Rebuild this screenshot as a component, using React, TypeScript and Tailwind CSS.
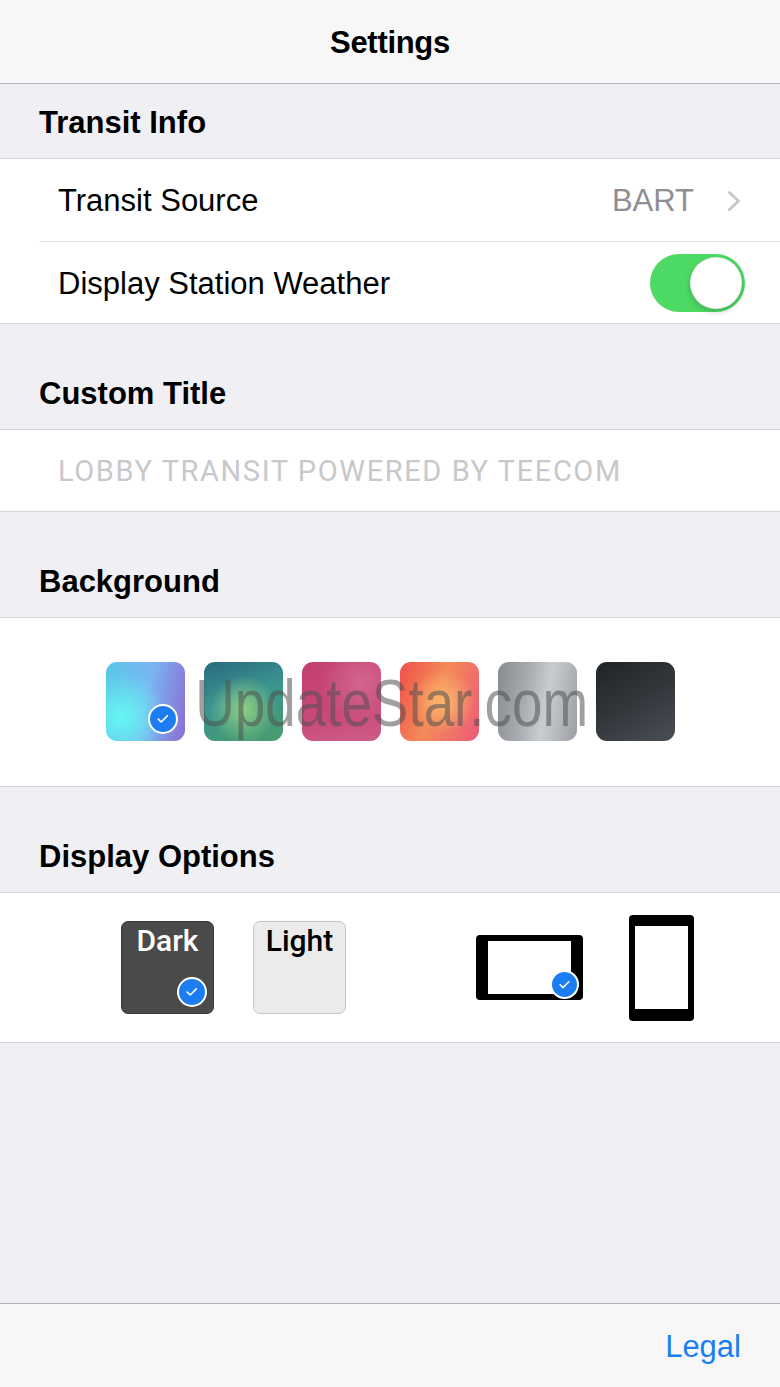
import { useState } from "react";

const swatches = [
  "bg-[radial-gradient(circle_at_20%_70%,#66f8f2_0%,rgba(102,248,242,0)_55%),linear-gradient(100deg,#58c6e6_0%,#7ab6f4_50%,#8a6ed4_100%)]",
  "bg-[radial-gradient(circle_at_50%_60%,#8fd083_0%,rgba(143,208,131,0)_55%),linear-gradient(160deg,#2a6a80_0%,#3a9590_45%,#4a9c6c_100%)]",
  "bg-[radial-gradient(circle_at_75%_25%,#d4668e_0%,rgba(212,102,142,0)_50%),linear-gradient(170deg,#c24070_0%,#c8487a_60%,#cf5c86_100%)]",
  "bg-[radial-gradient(circle_at_55%_50%,#fab86c_0%,rgba(250,184,108,0)_55%),linear-gradient(110deg,#f0504a_0%,#f48a58_45%,#ec5a78_100%)]",
  "bg-[linear-gradient(100deg,#878b90_0%,#a8acb1_35%,#cacdd0_60%,#9a9ea3_100%)]",
  "bg-[linear-gradient(150deg,#202326_0%,#33373c_50%,#4a4f56_100%)]",
];

function Check({ className }: { className?: string }) {
  return (
    <div className={`flex items-center justify-center rounded-full bg-[#1c7df2] border-2 border-white ${className ?? ""}`}>
      <svg viewBox="0 0 24 24" className="w-[60%] h-[60%]" fill="none" stroke="white" strokeWidth={2.4} strokeLinecap="round" strokeLinejoin="round">
        <path d="M5 12.5l4.5 4.5L19 7.5" />
      </svg>
    </div>
  );
}

function Header({ title, first }: { title: string; first?: boolean }) {
  return (
    <div className={`bg-[#efeff4] border-b border-[#d6d6da] px-[39px] pb-[17px] ${first ? "pt-[21px]" : "pt-[52px]"}`}>
      <p className="text-[31px] leading-[36px] font-bold text-black">{title}</p>
    </div>
  );
}

export default function App() {
  const [weather, setWeather] = useState(true);

  return (
    <div className="min-h-screen flex flex-col bg-[#efeff4] font-['Liberation_Sans',Arial,sans-serif] text-black">
      <div className="h-[84px] pt-[3px] bg-[#f7f7f7] border-b border-[#b4b4b8] flex items-center justify-center">
        <p className="text-[31px] font-bold tracking-[-0.3px]">Settings</p>
      </div>

      <Header title="Transit Info" first />
      <div className="bg-white border-b border-[#d6d6da]">
        <div className="h-[82px] pt-[2px] pl-[58px] pr-[39px] flex items-center justify-between">
          <p className="text-[31px]">Transit Source</p>
          <div className="flex items-center gap-[33px]">
            <span className="text-[31px] text-[#8e8e93]">BART</span>
            <svg width="14" height="22" viewBox="0 0 14 22" fill="none" stroke="#c7c7cc" strokeWidth={3} strokeLinecap="round" strokeLinejoin="round">
              <path d="M2.5 2.5l9 8.5-9 8.5" />
            </svg>
          </div>
        </div>
        <div className="ml-[39px] border-t border-[#e4e4e8] h-[82px] pl-[19px] pr-[35px] flex items-center justify-between">
          <p className="text-[31px] pt-[3px]">Display Station Weather</p>
          <button
            onClick={() => setWeather(!weather)}
            className={`w-[95px] h-[58px] rounded-full p-[3px] flex items-center ${weather ? "bg-[#4cd964] justify-end" : "bg-[#e5e5ea] justify-start"}`}
          >
            <span className="w-[52px] h-[52px] rounded-full bg-white shadow-[0_3px_6px_rgba(0,0,0,0.18)] border border-[#00000010]" />
          </button>
        </div>
      </div>

      <Header title="Custom Title" />
      <div className="bg-white border-b border-[#d6d6da] h-[82px] pt-[2px] pl-[58px] flex items-center">
        <input
          placeholder="LOBBY TRANSIT POWERED BY TEECOM"
          className="w-full outline-none text-[29px] tracking-[1.6px] font-['Roboto',sans-serif] font-normal placeholder:text-[#c8c8cc]"
        />
      </div>

      <Header title="Background" />
      <div className="relative bg-white border-b border-[#d6d6da] pt-[44px] pb-[45px] flex justify-center gap-[19px]">
        {swatches.map((s, i) => (
          <div key={i} className={`relative w-[79px] h-[79px] rounded-[11px] ${s}`}>
            {i === 0 && <Check className="absolute left-[42px] top-[42px] w-[30px] h-[30px]" />}
          </div>
        ))}
        <div className="pointer-events-none absolute inset-0 flex items-center justify-center pl-[4px]">
          <span className="text-[66px] leading-none text-[#505050]/55 scale-x-[0.83] pt-[2px]">UpdateStar.com</span>
        </div>
      </div>

      <Header title="Display Options" />
      <div className="bg-white border-b border-[#d6d6da] h-[150px] pl-[121px] flex items-center">
        <div className="relative w-[93px] h-[93px] rounded-[7px] bg-[#4a4a4a] border border-[#3a3a3a] flex justify-center">
          <span className="mt-[4px] text-[30px] leading-[30px] font-medium text-white font-['Roboto',sans-serif]">Dark</span>
          <Check className="absolute left-[55px] top-[55px] w-[30px] h-[30px]" />
        </div>
        <div className="ml-[39px] w-[93px] h-[93px] rounded-[7px] bg-[#ebebeb] border border-[#c4c4c4] flex justify-center">
          <span className="mt-[4px] text-[30px] leading-[30px] font-medium text-black font-['Roboto',sans-serif]">Light</span>
        </div>
        <div className="relative ml-[130px] w-[107px] h-[65px] rounded-[4px] bg-black px-[12px] py-[6px]">
          <div className="w-full h-full bg-white" />
          <Check className="absolute left-[74px] top-[35px] w-[29px] h-[29px]" />
        </div>
        <div className="ml-[46px] w-[65px] h-[106px] rounded-[4px] bg-black px-[6px] pt-[11px] pb-[12px]">
          <div className="w-full h-full bg-white" />
        </div>
      </div>

      <div className="flex-1" />

      <div className="h-[84px] pt-[3px] bg-[#f7f7f7] border-t border-[#b4b4b8] flex items-center justify-end pr-[39px]">
        <span className="text-[31px] text-[#1a7ef2]">Legal</span>
      </div>
    </div>
  );
}
